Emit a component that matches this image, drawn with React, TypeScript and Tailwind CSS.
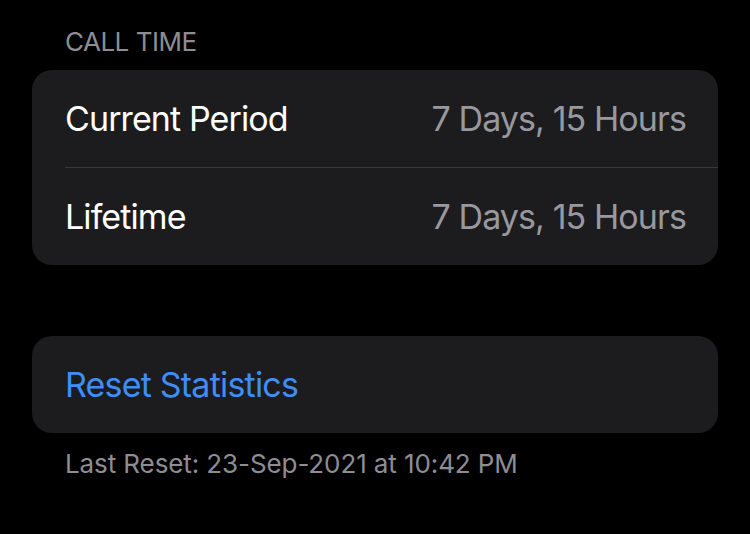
import React from 'react';

const rows = [
    { label: 'Current Period', value: '7 Days, 15 Hours' },
    { label: 'Lifetime', value: '7 Days, 15 Hours' },
];

const App = () => {
    return (
        <div className="min-h-[534px] w-[750px] bg-black px-8 pt-[26px] font-['Inter',sans-serif]">
            <div className="pl-[33px] text-[26px] leading-[32px] tracking-[-0.5px] text-[#8d8d93]">CALL TIME</div>
            <div className="mt-3 rounded-[20px] bg-[#1c1c1e]">
                {rows.map((row, i) => (
                    <div key={row.label}>
                        {i > 0 && <div className="ml-[33px] h-px bg-[#38383a]" />}
                        <div className="flex h-[97px] items-center justify-between pl-[33px] pr-8 text-[34px] tracking-[-0.9px]">
                            <span className="text-white">{row.label}</span>
                            <span className="text-[#98989e]">{row.value}</span>
                        </div>
                    </div>
                ))}
            </div>
            <div className="mt-[71px] flex h-[97px] items-center rounded-[20px] bg-[#1c1c1e] pl-[33px] text-[34px] tracking-[-0.8px] text-[#3f8ef5]">
                Reset Statistics
            </div>
            <div className="mt-[15px] pl-[33px] text-[26px] leading-[32px] tracking-[-0.1px] text-[#8d8d93]">
                Last Reset: 23-Sep-2021 at 10:42 PM
            </div>
        </div>
    );
};

export default App;
